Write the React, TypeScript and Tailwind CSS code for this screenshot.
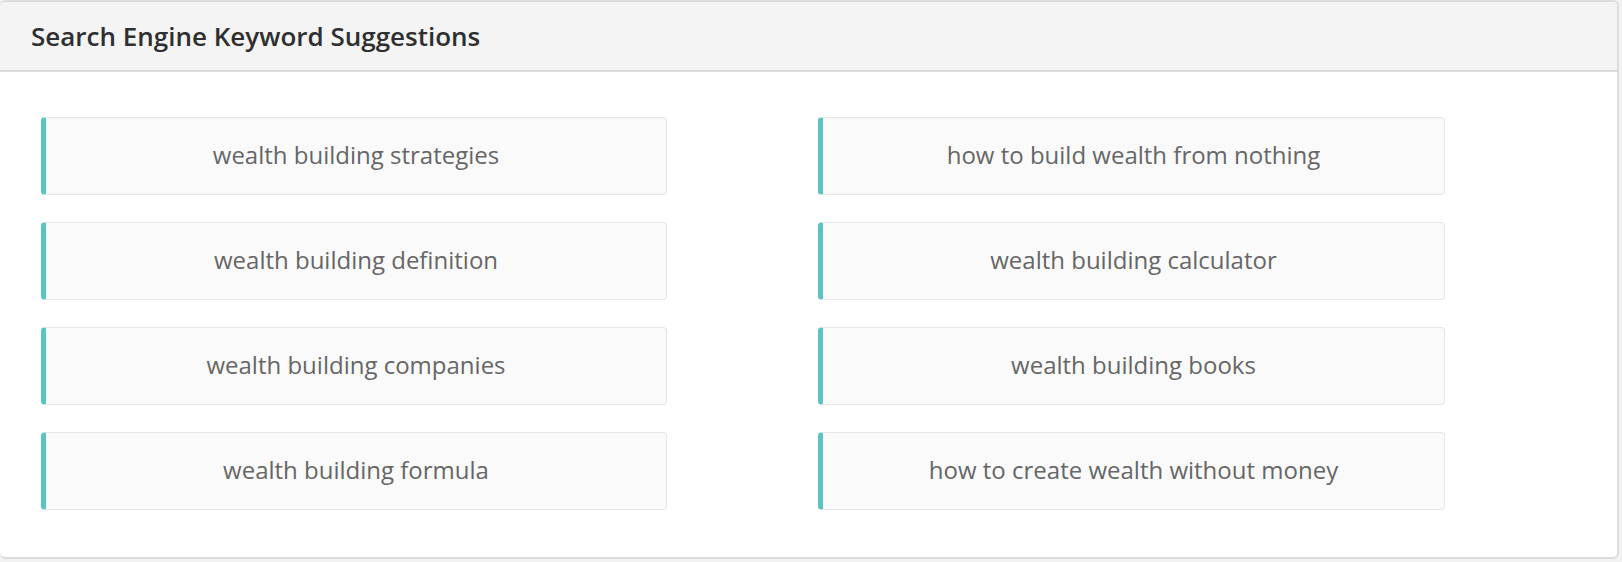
const left = [
  "wealth building strategies",
  "wealth building definition",
  "wealth building companies",
  "wealth building formula",
];
const right = [
  "how to build wealth from nothing",
  "wealth building calculator",
  "wealth building books",
  "how to create wealth without money",
];

function KeywordCard({ text }: { text: string }) {
  return (
    <div className="flex h-[78px] items-center justify-center rounded-[4px] border border-[#e6e6e6] border-l-[5px] border-l-[#5bc2c6] bg-[#fafafa] pb-[2px] text-[24px] text-[#666]">
      {text}
    </div>
  );
}

export default function App() {
  return (
    <div
      className="h-[562px] w-[1622px] bg-[#f2f2f2]"
      style={{ fontFamily: '"Open Sans", "Liberation Sans", sans-serif' }}
    >
      <div className="h-[559px] w-[1619px] overflow-hidden rounded-[6px] border-[2px] border-l-0 border-[#dcdcdc] bg-white">
        <div className="flex h-[70px] items-center border-b-[2px] border-[#dcdcdc] bg-[#f4f4f4] pl-[31px]">
          <h2 className="text-[26px] font-semibold text-[#2f2f2f]">Search Engine Keyword Suggestions</h2>
        </div>
        <div className="grid grid-cols-[626px_627px] gap-x-[151px] gap-y-[27px] pl-[41px] pt-[45px]">
          {left.map((l, i) => (
            <>
              <KeywordCard key={"l" + i} text={l} />
              <KeywordCard key={"r" + i} text={right[i]} />
            </>
          ))}
        </div>
      </div>
    </div>
  );
}
